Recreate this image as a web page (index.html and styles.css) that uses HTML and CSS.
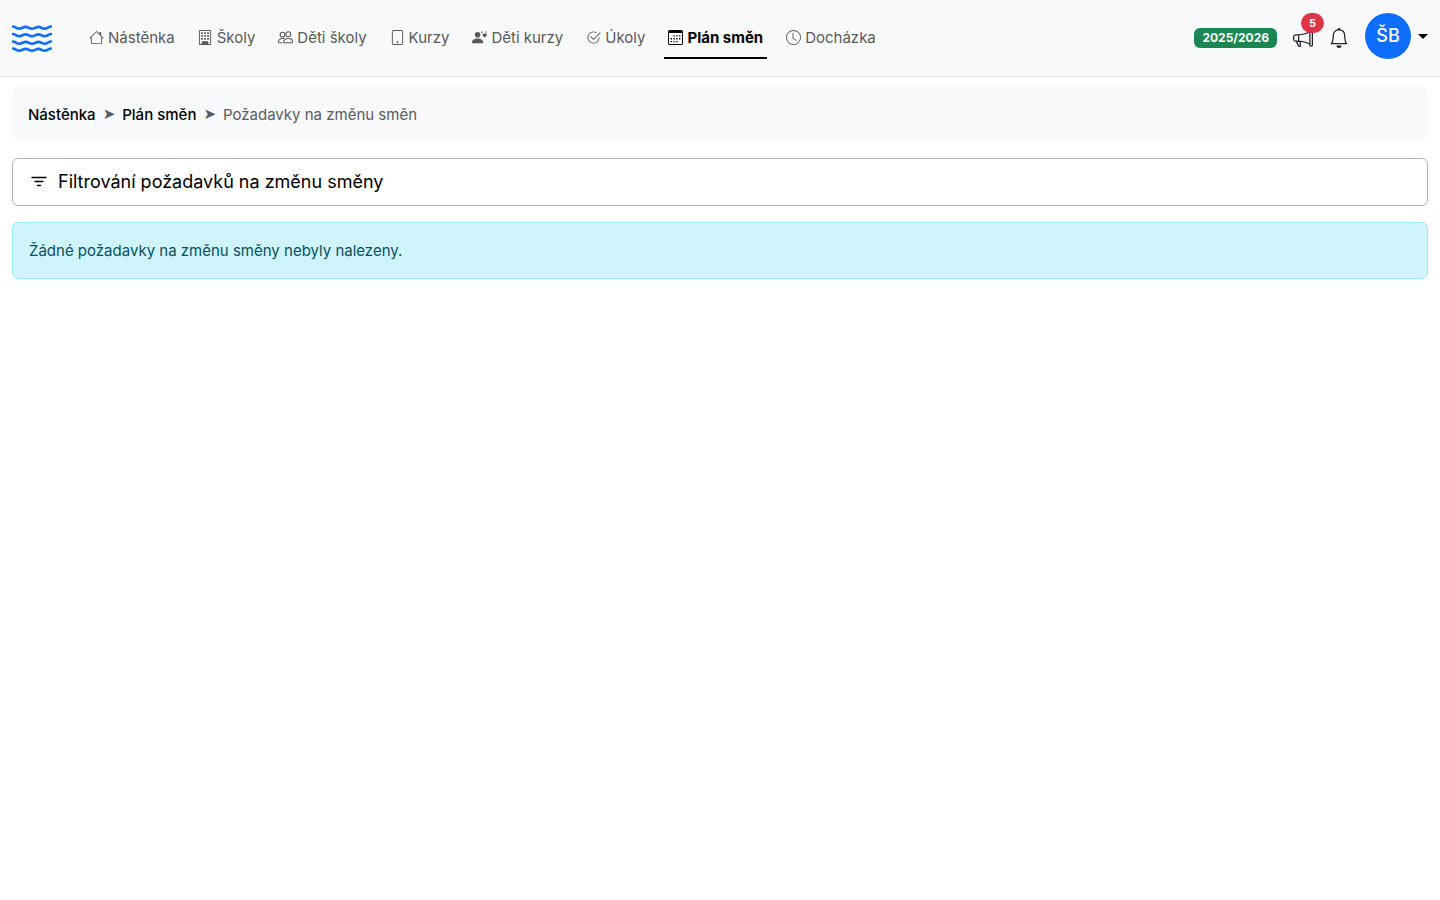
FILE: index.html
```html
<!DOCTYPE html>
<html lang="cs">
  <head>
    <meta charset="UTF-8" />
    <meta name="viewport" content="width=device-width, initial-scale=1.0" />
    <title>Požadavky na změnu směn</title>
    <link rel="stylesheet" href="styles.css">
  </head>
  <body>
    <header class="navbar">
      <a class="brand" href="#" aria-label="Domů">
        <svg width="40" height="28" viewBox="0 0 40 28" fill="none" stroke="currentColor" stroke-width="2.6" stroke-linecap="round" stroke-linejoin="round">
          <path d="M1 2.500C3.500 2.500 4.500 4.700 7.300 4.700S11 2.900 13.700 2.900 17.300 4.700 20 4.700s3.700-1.800 6.400-1.800S30 4.700 32.700 4.700 36.500 2.500 39 2.500" />
          <path d="M1 10C3.500 10 4.500 12.200 7.300 12.200S11 10.400 13.700 10.400 17.300 12.200 20 12.200s3.700-1.800 6.400-1.800S30 12.200 32.700 12.200 36.500 10 39 10" />
          <path d="M1 17.500C3.500 17.500 4.500 19.700 7.300 19.700S11 17.900 13.700 17.900 17.300 19.700 20 19.700s3.700-1.800 6.400-1.800S30 19.700 32.700 19.700 36.500 17.500 39 17.500" />
          <path d="M1 24.500C3.500 24.500 4.500 26.700 7.300 26.700S11 24.900 13.700 24.900 17.300 26.700 20 26.700s3.700-1.800 6.400-1.800S30 26.700 32.700 26.700 36.500 24.500 39 24.500" />
        </svg>
      </a>

      <nav class="menu">
        <a class="nav-link" href="#">
          <svg class="icon" viewBox="0 0 16 16"><path d="M8.707 1.500a1 1 0 0 0-1.414 0L.646 8.146a.5.5 0 0 0 .708.708L2 8.207V13.500A1.500 1.500 0 0 0 3.500 15h9a1.500 1.500 0 0 0 1.500-1.500V8.207l.646.647a.5.5 0 0 0 .708-.708L13 5.793V2.500a.5.5 0 0 0-.5-.5h-1a.5.5 0 0 0-.5.5v1.293zM13 7.207V13.500a.5.5 0 0 1-.5.5h-9a.5.5 0 0 1-.5-.5V7.207l5-5z" /></svg>
          Nástěnka
        </a>
        <a class="nav-link" href="#">
          <svg class="icon" viewBox="0 0 16 16">
            <path fill-rule="evenodd" d="M2 0a1 1 0 0 0-1 1v14a1 1 0 0 0 1 1h11a1 1 0 0 0 1-1V1a1 1 0 0 0-1-1zm0 1h11v14h-2v-2.500a.5.5 0 0 0-.5-.5h-6a.5.5 0 0 0-.5.5V15H2z" />
            <path d="M3.300 2.300h1.900v1.900H3.300zM6.500 2.300h1.900v1.900H6.500zM9.800 2.300h1.900v1.900H9.800zM3.300 5.400h1.900v1.900H3.300zM6.500 5.400h1.900v1.900H6.500zM9.800 5.400h1.900v1.900H9.800zM3.300 8.500h1.900v1.900H3.300zM6.500 8.500h1.900v1.900H6.500zM9.800 8.500h1.900v1.900H9.800zM5 12.500h5V15H5z" />
          </svg>
          Školy
        </a>
        <a class="nav-link" href="#">
          <svg class="icon" viewBox="0 0 16 16" fill="none" stroke="currentColor" stroke-width="1.100">
            <circle cx="4.800" cy="5" r="2.500" />
            <circle cx="11" cy="4.500" r="2.600" />
            <path d="M6.500 13.500c-.7 0-.8-.5-.5-1.200C6.700 10.300 8.500 9 11 9s4.300 1.300 4.500 3.300c.1.700-.1 1.200-1 1.200zM4.300 13.500H1.500c-.8 0-1-.5-.9-1.200C.9 10.300 2.500 9 4.800 9c.8 0 1.500.1 2.100.4" />
          </svg>
          Děti školy
        </a>
        <a class="nav-link" href="#">
          <svg class="icon" viewBox="0 0 16 16"><path fill-rule="evenodd" d="M12 1a1 1 0 0 1 1 1v12a1 1 0 0 1-1 1H4a1 1 0 0 1-1-1V2a1 1 0 0 1 1-1zM4 0a2 2 0 0 0-2 2v12a2 2 0 0 0 2 2h8a2 2 0 0 0 2-2V2a2 2 0 0 0-2-2z" /><path d="M8 14a1 1 0 1 0 0-2 1 1 0 0 0 0 2" /></svg>
          Kurzy
        </a>
        <a class="nav-link" href="#">
          <svg class="icon" viewBox="0 0 16 16">
            <circle cx="6" cy="5" r="3" />
            <path d="M1 14s-1 0-1-1 1-4 6-4 6 3 6 4-1 1-1 1zM13.500 8.100c-4.400-3-1.500-5.500 0-4 1.500-1.500 4.400 1 0 4M10 1.500l1.500.4-.7 1.200-1.300-.5zM15 1.200l1 .5-.6 1.300-1.200-.5z" />
          </svg>
          Děti kurzy
        </a>
        <a class="nav-link" href="#">
          <svg class="icon" viewBox="0 0 16 16"><path d="M2.500 8a5.500 5.500 0 0 1 8.250-4.764.5.5 0 0 0 .5-.866A6.500 6.500 0 1 0 14.500 8a.5.5 0 0 0-1 0 5.500 5.500 0 1 1-11 0" /><path d="M15.354 3.354a.5.5 0 0 0-.708-.708L8 9.293 5.354 6.646a.5.5 0 1 0-.708.708l3 3a.5.5 0 0 0 .708 0z" /></svg>
          Úkoly
        </a>
        <a class="nav-link active" href="#" aria-current="page">
          <svg class="icon" viewBox="0 0 16 16">
            <path fill-rule="evenodd" d="M2 0a2 2 0 0 0-2 2v12a2 2 0 0 0 2 2h12a2 2 0 0 0 2-2V2a2 2 0 0 0-2-2zM1 3.200h14V14a1 1 0 0 1-1 1H2a1 1 0 0 1-1-1z" />
            <path d="M5.800 5.600h1.400V7H5.800zM8.800 5.600h1.400V7H8.800zM11.800 5.600h1.400V7h-1.400zM2.800 8.600h1.400V10H2.800zM5.800 8.600h1.400V10H5.800zM8.800 8.600h1.400V10H8.800zM11.800 8.600h1.400V10h-1.400zM2.800 11.600h1.400V13H2.800zM5.800 11.600h1.400V13H5.800zM8.800 11.600h1.400V13H8.800z" />
          </svg>
          Plán směn
        </a>
        <a class="nav-link" href="#">
          <svg class="icon" viewBox="0 0 16 16"><path d="M8 3.500a.5.5 0 0 0-1 0V9a.5.5 0 0 0 .252.434l3.500 2a.5.5 0 0 0 .496-.868L8 8.710z" /><path d="M8 16A8 8 0 1 0 8 0a8 8 0 0 0 0 16m7-8A7 7 0 1 1 1 8a7 7 0 0 1 14 0" /></svg>
          Docházka
        </a>
      </nav>

      <div class="tools">
        <span class="year">2025/2026</span>
        <button class="tool" type="button" aria-label="Oznámení">
          <svg width="20" height="20" viewBox="0 0 16 16" fill="currentColor"><path d="M13 2.500a1.500 1.500 0 0 1 3 0v11a1.500 1.500 0 0 1-3 0v-.214c-2.162-1.241-4.490-1.843-6.912-2.083l.405 2.712A1 1 0 0 1 5.510 15.100h-.548a1 1 0 0 1-.916-.599l-1.850-3.490-.202-.003A2.014 2.014 0 0 1 0 9V7a2.020 2.020 0 0 1 1.992-2.013 75 75 0 0 0 2.483-.075c3.043-.154 6.148-.849 8.525-2.199zm1 0v11a.5.5 0 0 0 1 0v-11a.5.5 0 0 0-1 0m-1 1.350c-2.344 1.205-5.209 1.842-8 2.033v4.233q.27.015.537.036c2.568.189 5.093.744 7.463 1.993zm-9 6.215v-4.130a95 95 0 0 1-1.992.052A1.020 1.020 0 0 0 1 7v2c0 .55.448 1.002 1.006 1.009A61 61 0 0 1 4 10.065m-.657.975 1.609 3.037.010.024h.548l-.002-.014-.443-2.966a68 68 0 0 0-1.722-.082z" /></svg>
          <span class="count">5</span>
        </button>
        <button class="tool" type="button" aria-label="Upozornění">
          <svg width="20" height="20" viewBox="0 0 16 16" fill="currentColor"><path d="M8 16a2 2 0 0 0 2-2H6a2 2 0 0 0 2 2M8 1.918l-.797.161A4 4 0 0 0 4 6c0 .628-.134 2.197-.459 3.742-.16.767-.376 1.566-.663 2.258h10.244c-.287-.692-.502-1.490-.663-2.258C12.134 8.197 12 6.628 12 6a4 4 0 0 0-3.203-3.920zM14.220 12c.223.447.481.801.780 1H1c.299-.199.557-.553.780-1C2.680 10.200 3 6.880 3 6c0-2.420 1.720-4.440 4.005-4.901a1 1 0 1 1 1.990 0A5 5 0 0 1 13 6c0 .880.320 4.200 1.220 6" /></svg>
        </button>
        <button class="profile" type="button" aria-label="Profil ŠB">
          <span class="avatar">ŠB</span>
          <span class="caret"></span>
        </button>
      </div>
    </header>

    <main class="container">
      <nav class="breadcrumb">
        <a href="#">Nástěnka</a>
        <span class="divider">➤</span>
        <a href="#">Plán směn</a>
        <span class="divider">➤</span>
        <span>Požadavky na změnu směn</span>
      </nav>

      <button class="filter" type="button">
        <svg width="20" height="20" viewBox="0 0 20 20" fill="none" stroke="currentColor" stroke-width="1.300" stroke-linecap="round"><path d="M3 5.500h14M6 9.500h8M8.500 13.500h3" /></svg>
        Filtrování požadavků na změnu směny
      </button>

      <div class="alert" role="alert">Žádné požadavky na změnu směny nebyly nalezeny.</div>
    </main>
  </body>
</html>
```

FILE: styles.css
```css
* {
  box-sizing: border-box;
}

body {
  margin: 0;
  font-family: Inter, "Liberation Sans", sans-serif;
  font-size: 15px;
  line-height: 23px;
  color: #212529;
  background-color: #fff;
}

a {
  color: inherit;
  text-decoration: none;
}

button {
  font: inherit;
  color: inherit;
  background: none;
  border: 0;
  padding: 0;
  cursor: pointer;
}

svg {
  display: block;
  flex-shrink: 0;
}

.navbar {
  display: flex;
  align-items: center;
  padding: 8px 12px;
  min-height: 77px;
  background-color: #f8f9fa;
  border-bottom: 1px solid #dee2e6;
}

.brand {
  margin-right: 33px;
  color: #0d6efd;
}

.menu {
  display: flex;
  gap: 15px;
}

.nav-link {
  display: flex;
  align-items: center;
  gap: 4px;
  padding: 8px 4px;
  color: #595a5b;
  border-bottom: 2px solid transparent;
  white-space: nowrap;
}

.nav-link.active {
  color: #000;
  font-weight: 700;
  border-bottom-color: #000;
}

.icon {
  width: 15px;
  height: 15px;
}

.icon:not([fill]) {
  fill: currentColor;
}

.tools {
  display: flex;
  align-items: center;
  gap: 16px;
  margin-left: auto;
}

.year {
  padding: 4px 8px;
  font-size: 12px;
  line-height: 12px;
  font-weight: 700;
  color: #fff;
  background-color: #198754;
  border-radius: 6px;
}

.tool {
  position: relative;
}

.count {
  position: absolute;
  top: -15px;
  left: 8px;
  padding: 4px 8px;
  font-size: 11px;
  line-height: 12px;
  font-weight: 700;
  color: #fff;
  background-color: #dc3545;
  border-radius: 10px;
}

.profile {
  display: flex;
  align-items: center;
  gap: 7px;
  margin-bottom: 4px;
  color: #000;
}

.avatar {
  width: 46px;
  height: 46px;
  font-size: 18px;
  line-height: 46px;
  font-weight: 500;
  color: #fff;
  background-color: #0d6efd;
  border-radius: 50%;
}

.caret {
  border-top: 5px solid;
  border-left: 5px solid transparent;
  border-right: 5px solid transparent;
}

.container {
  display: flex;
  flex-direction: column;
  gap: 16px;
  padding: 10px 12px;
}

.breadcrumb {
  display: flex;
  gap: 7px;
  padding: 16px;
  color: #595c5f;
  background-color: #f8f9fa;
  border-radius: 8px;
}

.breadcrumb a {
  color: #000;
  font-weight: 500;
}

.divider {
  font-family: "DejaVu Sans", sans-serif;
}

.filter {
  display: flex;
  align-items: center;
  gap: 9px;
  padding: 11px 16px;
  font-size: 18px;
  line-height: 24px;
  color: #000;
  text-align: left;
  border: 1px solid #adb5bd;
  border-radius: 6px;
}

.alert {
  padding: 16px;
  color: #055160;
  background-color: #cff4fc;
  border: 1px solid #9eeaf9;
  border-radius: 6px;
}
```
